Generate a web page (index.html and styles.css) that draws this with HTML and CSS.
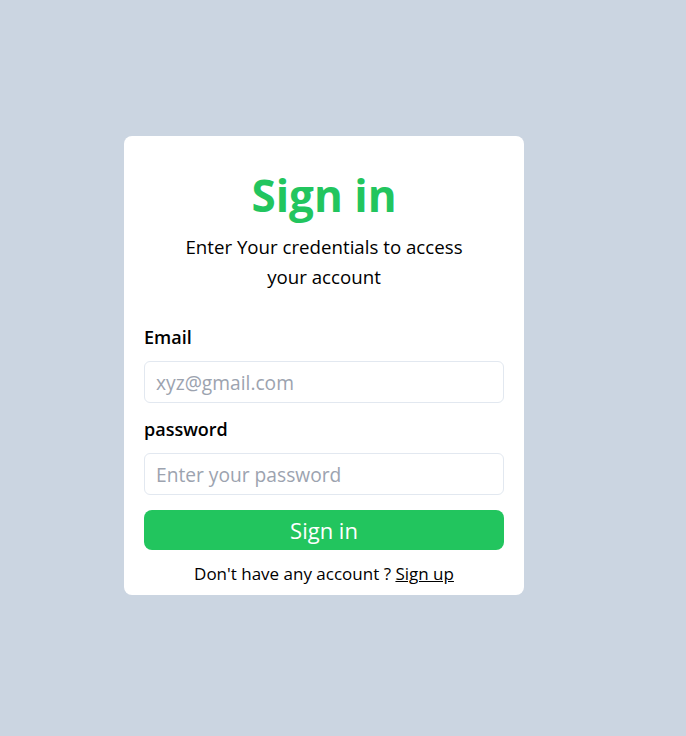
FILE: index.html
```html
<!DOCTYPE html>
<html lang="en">
<head>
<meta charset="utf-8">
<title>Sign in</title>
<link rel="stylesheet" href="styles.css">
</head>
<body>
<main class="page">
  <div class="card">
    <h1 class="title">Sign in</h1>
    <p class="subtitle">Enter Your credentials to access your account</p>
    <form class="form">
      <label class="label" for="email">Email</label>
      <input class="input" id="email" type="email" placeholder="xyz@gmail.com">
      <label class="label" for="password">password</label>
      <input class="input" id="password" type="password" placeholder="Enter your password">
      <button class="button" type="button">Sign in</button>
    </form>
    <p class="footer">Don't have any account ? <a class="link" href="#">Sign up</a></p>
  </div>
</main>
</body>
</html>
```
FILE: styles.css
```css
* { box-sizing: border-box; }
html, body { margin: 0; padding: 0; }
body {
  background: #cbd5e1;
  font-family: "Open Sans", "Noto Sans", sans-serif;
  color: #000;
  min-height: 736px;
}
.page {
  padding: 136px 0 0 124px;
}
.card {
  width: 400px;
  height: 459px;
  background: #fff;
  border-radius: 8px;
  padding: 30px 20px 0;
  display: flex;
  flex-direction: column;
}
.title {
  margin: 0;
  text-align: center;
  color: #22c55e;
  font-size: 44px;
  font-weight: 700;
  line-height: 58px;
}
.subtitle {
  margin: 8px auto 0;
  width: 300px;
  text-align: center;
  font-size: 18.7px;
  line-height: 30px;
}
.form {
  display: flex;
  flex-direction: column;
  margin-top: 31px;
}
.label {
  font-size: 18px;
  font-weight: 600;
  line-height: 28px;
  margin-bottom: 10px;
}
.input {
  height: 42px;
  border: 1px solid #e2e8f0;
  border-radius: 6px;
  padding: 0 11px;
  font: inherit;
  font-size: 19.2px;
  margin-bottom: 12px;
  outline: none;
}
.input::placeholder { color: #9ca3af; }
.button {
  height: 40px;
  margin-top: 3px;
  border: none;
  border-radius: 8px;
  background: #22c55e;
  color: #fff;
  font: inherit;
  font-size: 22px;
  line-height: 40px;
  padding: 0;
}
.footer {
  margin: 10px 0 0;
  text-align: center;
  font-size: 17px;
  line-height: 28px;
}
.link { color: #000; text-decoration: underline; }
```
